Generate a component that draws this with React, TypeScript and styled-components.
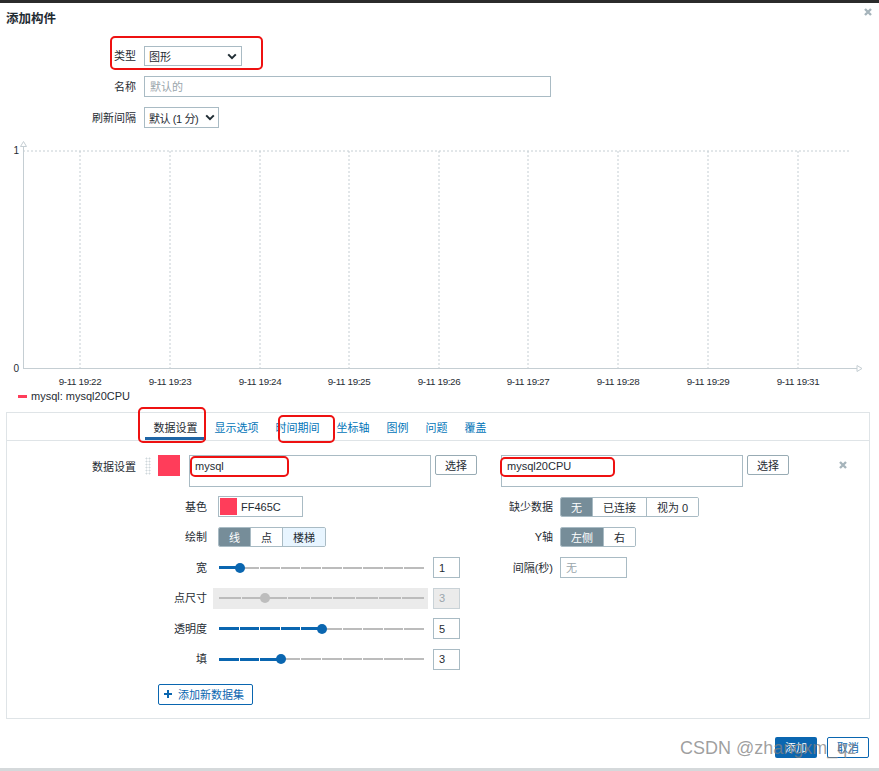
import React from "react";
import styled, { createGlobalStyle } from "styled-components";

const GlobalStyle = createGlobalStyle`
  html, body {
    margin: 0;
    padding: 0;
    background: #ffffff;
  }
  body {
    font-family: "Liberation Sans", Arial, "Noto Sans CJK SC", sans-serif;
    font-size: 11px;
    color: #1f2c33;
  }
  * {
    box-sizing: border-box;
  }
`;

const BLUE = "#0a66b0";
const BORDER = "#a9bbc4";
const SWATCH = "#ff3d5a";

const tabs = ["数据设置", "显示选项", "时间期间", "坐标轴", "图例", "问题", "覆盖"];
const timeLabels = [
  { x: 80, t: "9-11 19:22" },
  { x: 170, t: "9-11 19:23" },
  { x: 260, t: "9-11 19:24" },
  { x: 349, t: "9-11 19:25" },
  { x: 439, t: "9-11 19:26" },
  { x: 528, t: "9-11 19:27" },
  { x: 618, t: "9-11 19:28" },
  { x: 708, t: "9-11 19:29" },
  { x: 798, t: "9-11 19:31" },
];

const Chevron = () => (
  <svg width="10" height="7" viewBox="0 0 10 7">
    <path d="M1.2 1.4L5 5.2l3.8-3.8" stroke="#1f2c33" strokeWidth="2" fill="none" />
  </svg>
);

const Cross = ({ size = 8 }: { size?: number }) => (
  <svg width={size} height={size} viewBox="0 0 8 8">
    <path d="M1 1l6 6M7 1L1 7" stroke="#a6b4bb" strokeWidth="2.4" fill="none" />
  </svg>
);

const Chart = () => (
  <ChartSvg width="879" height="254" viewBox="0 136 879 254">
    <line x1="23" y1="151" x2="850" y2="151" stroke="#c5ced3" strokeDasharray="2 2" />
    {timeLabels.map((l) => (
      <line key={l.x} x1={l.x} y1="151" x2={l.x} y2="368" stroke="#c5ced3" strokeDasharray="2 2" />
    ))}
    <line x1="23.5" y1="146" x2="23.5" y2="368" stroke="#c5ced3" />
    <line x1="23" y1="368.5" x2="857" y2="368.5" stroke="#c5ced3" />
    <path d="M20.5 146.5L23.5 141.5l3 5z" fill="#fff" stroke="#c5ced3" />
    <path d="M857 365.5l5 3-5 3z" fill="#fff" stroke="#c5ced3" />
    <text x="19" y="154" textAnchor="end" fontSize="10" fill="#1f2c33">1</text>
    <text x="19" y="372" textAnchor="end" fontSize="10" fill="#1f2c33">0</text>
    {timeLabels.map((l) => (
      <text
        key={l.t}
        x={l.x}
        y="385"
        textAnchor="middle"
        fontSize="9.8"
        letterSpacing="-0.35"
        fill="#1f2c33"
      >
        {l.t}
      </text>
    ))}
  </ChartSvg>
);

interface SliderProps {
  value: number;
  min: number;
  max: number;
  disabled?: boolean;
}

const Slider: React.FC<SliderProps> = ({ value, min, max, disabled }) => {
  const steps = max - min;
  const pct = ((value - min) / steps) * 100;
  return (
    <SliderBox $disabled={disabled}>
      <Track>
        {Array.from({ length: steps }).map((_, i) => (
          <TrackSeg key={i} $on={!disabled && i < value - min} />
        ))}
        <Thumb $disabled={disabled} style={{ left: `${pct}%` }} />
      </Track>
    </SliderBox>
  );
};

interface SegProps {
  items: string[];
  active: number;
  hover?: number;
}

const Segmented: React.FC<SegProps> = ({ items, active, hover }) => (
  <SegGroup>
    {items.map((item, i) => (
      <SegItem key={item} $active={i === active} $hover={i === hover}>
        {item}
      </SegItem>
    ))}
  </SegGroup>
);

export default function App() {
  return (
    <>
      <GlobalStyle />
      <Page>
        <TopBar />
        <Header>
          <Title>添加构件</Title>
          <CloseButton>
            <Cross />
          </CloseButton>
        </Header>

        <Form>
          <FieldLabel>类型</FieldLabel>
          <Select $width={98} $height={20}>
            <span>图形</span>
            <Chevron />
          </Select>
          <FieldLabel>名称</FieldLabel>
          <TextInput $width={407} placeholder="默认的" readOnly />
          <FieldLabel>刷新间隔</FieldLabel>
          <Select $width={75} $height={21} $tight>
            <span>默认 (1 分)</span>
            <Chevron />
          </Select>
        </Form>

        <Chart />

        <Legend>
          <LegendMark />
          <span>mysql: mysql20CPU</span>
        </Legend>

        <Panel>
          <TabBar>
            {tabs.map((t, i) => (
              <Tab key={t} $active={i === 0}>
                {t}
              </Tab>
            ))}
          </TabBar>
          <PanelBody>
            <DatasetRow>
              <DatasetLabel>数据设置</DatasetLabel>
              <DatasetContent>
                <DragHandle />
                <ColorSwatch />
                <PatternBox>mysql</PatternBox>
                <SelectButton>选择</SelectButton>
                <PatternBox $gapBefore>mysql20CPU</PatternBox>
                <SelectButton>选择</SelectButton>
                <RemoveButton>
                  <Cross />
                </RemoveButton>
              </DatasetContent>
            </DatasetRow>

            <Options>
              <OptionColumn $labelWidth={62} $gap={11}>
                <OptionLabel>基色</OptionLabel>
                <ColorInput>
                  <ColorChip />
                  <span>FF465C</span>
                </ColorInput>

                <OptionLabel>绘制</OptionLabel>
                <Segmented items={["线", "点", "楼梯"]} active={0} hover={2} />

                <OptionLabel>宽</OptionLabel>
                <SliderRow>
                  <Slider value={1} min={0} max={10} />
                  <NumberBox>1</NumberBox>
                </SliderRow>

                <OptionLabel>点尺寸</OptionLabel>
                <SliderRow>
                  <Slider value={3} min={1} max={10} disabled />
                  <NumberBox $disabled>3</NumberBox>
                </SliderRow>

                <OptionLabel>透明度</OptionLabel>
                <SliderRow>
                  <Slider value={5} min={0} max={10} />
                  <NumberBox>5</NumberBox>
                </SliderRow>

                <OptionLabel>填</OptionLabel>
                <SliderRow>
                  <Slider value={3} min={0} max={10} />
                  <NumberBox>3</NumberBox>
                </SliderRow>
              </OptionColumn>

              <OptionColumn $labelWidth={73} $gap={7}>
                <OptionLabel>缺少数据</OptionLabel>
                <Segmented items={["无", "已连接", "视为 0"]} active={0} />

                <OptionLabel>Y轴</OptionLabel>
                <Segmented items={["左侧", "右"]} active={0} />

                <OptionLabel>间隔(秒)</OptionLabel>
                <TextInput $width={67} placeholder="无" readOnly />
              </OptionColumn>
            </Options>

            <AddButton>
              <svg width="8" height="8" viewBox="0 0 8 8">
                <path d="M4 0v8M0 4h8" stroke={BLUE} strokeWidth="2" />
              </svg>
              添加新数据集
            </AddButton>
          </PanelBody>
        </Panel>

        <Footer>
          <PrimaryButton>添加</PrimaryButton>
          <OutlineButton>取消</OutlineButton>
        </Footer>

        <BottomBar />

        <Annotation $left={110} $top={36} $w={153} $h={34} />
        <Annotation $left={138} $top={407} $w={68} $h={36} />
        <Annotation $left={278} $top={415} $w={57} $h={28} />
        <Annotation $left={190} $top={456} $w={99} $h={21} />
        <Annotation $left={500} $top={457} $w={115} $h={20} />

        <Watermark>CSDN @zhangxm_qz</Watermark>
      </Page>
    </>
  );
}

const Page = styled.div`
  position: relative;
  width: 879px;
  height: 771px;
  display: flex;
  flex-direction: column;
  background: #ffffff;
  overflow: hidden;
`;

const TopBar = styled.div`
  height: 3px;
  flex-shrink: 0;
  background: #2b2b2b;
`;

const BottomBar = styled.div`
  margin-top: auto;
  height: 3px;
  flex-shrink: 0;
  background: #d5d9db;
`;

const Header = styled.div`
  display: flex;
  justify-content: space-between;
  align-items: flex-start;
  padding: 9px 7px 0 6px;
`;

const Title = styled.h1`
  margin: 0;
  font-size: 12.5px;
  line-height: 14px;
  font-weight: bold;
  color: #1f2c33;
`;

const CloseButton = styled.div`
  display: flex;
  margin-top: -4px;
`;

const Form = styled.div`
  display: grid;
  grid-template-columns: 136px auto;
  column-gap: 8px;
  row-gap: 10px;
  justify-items: start;
  align-items: center;
  margin-top: 20px;
`;

const FieldLabel = styled.label`
  justify-self: end;
  line-height: 14px;
`;

const Select = styled.div<{ $width: number; $height: number; $tight?: boolean }>`
  width: ${(p) => p.$width}px;
  height: ${(p) => p.$height}px;
  display: flex;
  align-items: center;
  justify-content: space-between;
  padding: 0 ${(p) => (p.$tight ? "3px" : "4px")} 0 4px;
  border: 1px solid ${BORDER};
  background: #ffffff;
  white-space: nowrap;
  letter-spacing: ${(p) => (p.$tight ? "-0.4px" : "0")};
`;

const TextInput = styled.input<{ $width: number }>`
  width: ${(p) => p.$width}px;
  height: 21px;
  padding: 0 5px;
  border: 1px solid ${BORDER};
  border-radius: 0;
  font: inherit;
  color: #1f2c33;
  outline: none;
  &::placeholder {
    color: #9aa5ab;
  }
`;

const ChartSvg = styled.svg`
  display: block;
  margin-top: 8px;
  flex-shrink: 0;
`;

const Legend = styled.div`
  height: 12px;
  display: flex;
  align-items: center;
  gap: 4px;
  padding-left: 18px;
  line-height: 12px;
`;

const LegendMark = styled.span`
  width: 9px;
  height: 3px;
  background: ${SWATCH};
`;

const Panel = styled.div`
  margin: 10px 9px 0 6px;
  border: 1px solid #dfe4e7;
`;

const TabBar = styled.div`
  display: flex;
  height: 28px;
  padding-left: 138px;
  border-bottom: 1px solid #dfe4e7;
`;

const Tab = styled.div<{ $active: boolean }>`
  height: 27px;
  display: flex;
  align-items: center;
  padding: 0 8.5px;
  color: ${(p) => (p.$active ? "#1f2c33" : "#0275b8")};
  box-shadow: ${(p) => (p.$active ? "inset 0 -3px 0 #1f65a6" : "none")};
`;

const PanelBody = styled.div`
  padding: 14px 0 13px 0;
`;

const DatasetRow = styled.div`
  display: grid;
  grid-template-columns: 129px 1fr;
  column-gap: 9px;
`;

const DatasetLabel = styled.div`
  justify-self: end;
  line-height: 14px;
  margin-top: 5px;
`;

const DatasetContent = styled.div`
  display: flex;
  align-items: flex-start;
`;

const DragHandle = styled.div`
  width: 6px;
  height: 18px;
  margin: 2px 7px 0 0;
  background-image: radial-gradient(circle, #cfd7db 0.9px, transparent 1.1px);
  background-size: 3px 3px;
`;

const ColorSwatch = styled.div`
  width: 22px;
  height: 21px;
  margin-right: 9px;
  background: ${SWATCH};
`;

const PatternBox = styled.div<{ $gapBefore?: boolean }>`
  width: 242px;
  height: 32px;
  margin-left: ${(p) => (p.$gapBefore ? "24px" : "0")};
  margin-right: 4px;
  padding: 4px 5px;
  border: 1px solid ${BORDER};
  line-height: 13px;
`;

const SelectButton = styled.div`
  width: 42px;
  height: 20px;
  display: flex;
  align-items: center;
  justify-content: center;
  border: 1px solid #98abb4;
  border-radius: 2px;
  background: #ffffff;
`;

const RemoveButton = styled.div`
  display: flex;
  margin: 6px 0 0 50px;
`;

const Options = styled.div`
  display: flex;
  gap: 20px;
  margin: 9px 0 0 138px;
`;

const OptionColumn = styled.div<{ $labelWidth: number; $gap: number }>`
  display: grid;
  grid-template-columns: ${(p) => p.$labelWidth}px 242px;
  grid-auto-rows: 21px;
  column-gap: ${(p) => p.$gap}px;
  row-gap: 9.6px;
  align-items: center;
  justify-items: start;
  align-content: start;
`;

const OptionLabel = styled.div`
  justify-self: end;
  line-height: 14px;
  white-space: nowrap;
`;

const ColorInput = styled.div`
  width: 85px;
  height: 21px;
  display: flex;
  align-items: center;
  gap: 4px;
  padding: 1px;
  border: 1px solid ${BORDER};
`;

const ColorChip = styled.span`
  width: 17px;
  height: 17px;
  background: ${SWATCH};
`;

const SegGroup = styled.div`
  display: inline-flex;
  height: 20px;
  border: 1px solid ${BORDER};
  border-radius: 2px;
  overflow: hidden;
`;

const SegItem = styled.div<{ $active: boolean; $hover: boolean }>`
  display: flex;
  align-items: center;
  padding: 0 10px;
  white-space: nowrap;
  color: ${(p) => (p.$active ? "#ffffff" : "#1f2c33")};
  background: ${(p) => (p.$active ? "#768d99" : p.$hover ? "#e8f5ff" : "#ffffff")};
  & + & {
    border-left: 1px solid ${BORDER};
  }
`;

const SliderRow = styled.div`
  display: flex;
  align-items: center;
  gap: 5px;
`;

const SliderBox = styled.div<{ $disabled?: boolean }>`
  width: 215px;
  height: 21px;
  margin-left: -5px;
  padding: 0 4px 0 6px;
  display: flex;
  align-items: center;
  background: ${(p) => (p.$disabled ? "#ebebeb" : "transparent")};
`;

const Track = styled.div`
  position: relative;
  flex: 1;
  height: 3px;
  display: flex;
  align-items: center;
  gap: 1px;
`;

const TrackSeg = styled.span<{ $on: boolean }>`
  flex: 1;
  height: ${(p) => (p.$on ? "3px" : "2px")};
  background: ${(p) => (p.$on ? BLUE : "#bcbcbc")};
`;

const Thumb = styled.span<{ $disabled?: boolean }>`
  position: absolute;
  top: 50%;
  width: 10px;
  height: 10px;
  margin: -5px 0 0 -5px;
  border-radius: 50%;
  background: ${(p) => (p.$disabled ? "#bdbdbd" : BLUE)};
`;

const NumberBox = styled.div<{ $disabled?: boolean }>`
  width: 27px;
  height: 21px;
  display: flex;
  align-items: center;
  padding-left: 5px;
  border: 1px solid ${(p) => (p.$disabled ? "#c9d2d7" : BORDER)};
  background: ${(p) => (p.$disabled ? "#ebebeb" : "#ffffff")};
  color: ${(p) => (p.$disabled ? "#9aa5ab" : "#1f2c33")};
`;

const AddButton = styled.div`
  display: inline-flex;
  align-items: center;
  gap: 6px;
  height: 21px;
  width: 95px;
  margin: 14px 0 0 151px;
  padding-left: 5px;
  border: 1px solid ${BLUE};
  border-radius: 2px;
  color: ${BLUE};
`;

const Footer = styled.div`
  display: flex;
  justify-content: flex-end;
  gap: 10px;
  margin-top: 18px;
  padding-right: 10px;
`;

const PrimaryButton = styled.div`
  width: 42px;
  height: 21px;
  display: flex;
  align-items: center;
  justify-content: center;
  border-radius: 2px;
  background: ${BLUE};
  color: #ffffff;
`;

const OutlineButton = styled(PrimaryButton)`
  background: #ffffff;
  color: ${BLUE};
  border: 1px solid ${BLUE};
`;

const Annotation = styled.div<{ $left: number; $top: number; $w: number; $h: number }>`
  position: absolute;
  left: ${(p) => p.$left}px;
  top: ${(p) => p.$top}px;
  width: ${(p) => p.$w}px;
  height: ${(p) => p.$h}px;
  border: 2px solid #ee1111;
  border-radius: 5px;
  pointer-events: none;
`;

const Watermark = styled.div`
  position: absolute;
  left: 680px;
  top: 736px;
  font-size: 18px;
  line-height: 24px;
  color: rgba(128, 128, 128, 0.75);
  white-space: nowrap;
  pointer-events: none;
`;
